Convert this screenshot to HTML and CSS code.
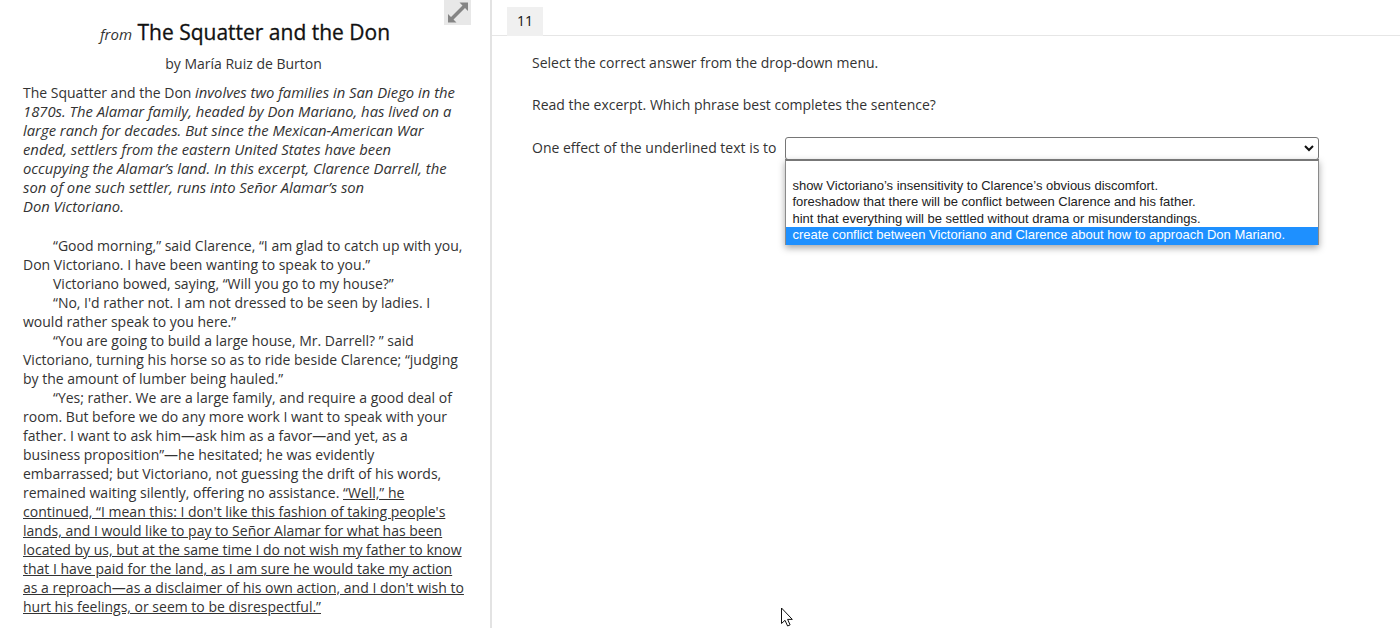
FILE: index.html
```html
<!DOCTYPE html>
<html lang="en">
<head>
<meta charset="utf-8">
<title>The Squatter and the Don</title>
<link rel="stylesheet" href="styles.css">
</head>
<body>
<div class="app">
  <aside class="passage">
    <button class="expand" aria-label="Expand">
      <svg width="26" height="24" viewBox="0 0 26 24"><path fill="#858585" d="M23 1.500V10l-3-3L8.500 18.500l3 3H3V13l3 3L17.500 4.500l-3-3z"/></svg>
    </button>
    <h1 class="title"><em>from</em> The Squatter and the Don</h1>
    <p class="author">by María Ruiz de Burton</p>
    <p class="intro">The Squatter and the Don <em>involves two families in San Diego in the 1870s. The Alamar family, headed by Don Mariano, has lived on a large ranch for decades. But since the Mexican-American War ended, settlers from the eastern United States have been<br>occupying the Alamar’s land. In this excerpt, Clarence Darrell, the<br>son of one such settler, runs into Señor Alamar’s son<br>Don Victoriano.</em></p>
    <p class="para">“Good morning,” said Clarence, “I am glad to catch up with you, Don Victoriano. I have been wanting to speak to you.”</p>
    <p class="para">Victoriano bowed, saying, “Will you go to my house?”</p>
    <p class="para">“No, I'd rather not. I am not dressed to be seen by ladies. I would rather speak to you here.”</p>
    <p class="para">“You are going to build a large house, Mr. Darrell? ” said Victoriano, turning his horse so as to ride beside Clarence; “judging by the amount of lumber being hauled.”</p>
    <p class="para">“Yes; rather. We are a large family, and require a good deal of room. But before we do any more work I want to speak with your father. I want to ask him—ask him as a favor—and yet, as a business proposition”—he hesitated; he was evidently embarrassed; but Victoriano, not guessing the drift of his words, remained waiting silently, offering no assistance. <u>“Well,” he continued, “I mean this: I don't like this fashion of taking people's lands, and I would like to pay to Señor Alamar for what has been located by us, but at the same time I do not wish my father to know that I have paid for the land, as I am sure he would take my action as a reproach—as a disclaimer of his own action, and I don't wish to hurt his feelings, or seem to be disrespectful.”</u></p>
  </aside>
  <main class="question">
    <div class="tabs"><span class="tab">11</span></div>
    <div class="body">
      <p class="instr">Select the correct answer from the drop-down menu.</p>
      <p class="instr">Read the excerpt. Which phrase best completes the sentence?</p>
      <div class="answer">
        <span>One effect of the underlined text is to</span>
        <div class="dropdown">
          <select class="select" aria-label="Answer"><option></option></select>
          <svg class="chevron" width="10" height="7" viewBox="0 0 10 7"><path fill="none" stroke="#111" stroke-width="2" d="M1 1l4 4 4-4"/></svg>
          <ul class="menu">
            <li>show Victoriano’s insensitivity to Clarence’s obvious discomfort.</li>
            <li>foreshadow that there will be conflict between Clarence and his father.</li>
            <li>hint that everything will be settled without drama or misunderstandings.</li>
            <li class="active">create conflict between Victoriano and Clarence about how to approach Don Mariano.</li>
          </ul>
        </div>
      </div>
    </div>
  </main>
</div>
<svg class="cursor" width="13" height="20" viewBox="0 0 13 20"><path fill="#fff" stroke="#111" stroke-width="1" d="M1.500 1v15.500l3.500-3.200 2.600 5.700 2.500-1.100-2.500-5.500h4.700z"/></svg>
</body>
</html>
```
FILE: styles.css
```css
* { box-sizing: border-box; }
html, body { margin: 0; height: 100%; overflow: hidden; background: #fff; }
body { font-family: "Open Sans", sans-serif; font-size: 14px; line-height: 19px; color: #333; position: relative; }
.app { display: flex; height: 628px; }
.passage { position: relative; width: 492px; flex: none; padding: 0 26px 0 23px; border-right: 2px solid #e3e3e3; overflow: hidden; }
.expand { position: absolute; top: 0; left: 444px; width: 27px; height: 25px; padding: 0; border: 0; background: #e8e8e8; display: flex; align-items: center; justify-content: center; }
.title { margin: 17px 0 0; padding-left: 3px; font-size: 21px; line-height: 30px; font-weight: 400; color: #111; text-align: center; -webkit-text-stroke: 0.3px #111; }
.title em { font-size: 15px; color: #333; -webkit-text-stroke: 0; }
.author { margin: 5px 0 0; text-align: center; }
.intro { margin: 10px 0 20px; }
.intro em { font-size: 14.800px; line-height: 19px; }
.para { margin: 0; text-indent: 30px; }
.question { flex: 1; min-width: 0; }
.tabs { height: 36px; padding: 7px 0 0 15px; border-bottom: 1px solid #e6e6e6; }
.tab { display: block; width: 36px; height: 29px; background: #f0f0f0; color: #111; text-align: center; line-height: 27px; }
.body { padding: 17px 0 0 40px; }
.instr { margin: 0 0 23px; }
.answer { display: flex; align-items: flex-start; gap: 9px; line-height: 21px; }
.dropdown { position: relative; width: 534px; }
.select { display: block; width: 100%; height: 23px; padding: 0; appearance: none; font-family: "Liberation Sans", sans-serif; font-size: 13px; background: #fff; border: 1px solid #767676; border-radius: 3px; }
.chevron { position: absolute; top: 8px; left: 519px; }
.menu { position: absolute; z-index: 2; top: 22px; left: 0; width: 100%; margin: 0; padding: 17px 0 0; list-style: none; background: #fff; border: 1px solid #8a8a8a; border-top: 2px solid #777; border-bottom: 0; font-family: "Liberation Sans", sans-serif; font-size: 13px; line-height: 16.400px; color: #222; box-shadow: 0 3px 7px rgba(0,0,0,.35); }
.menu li { padding-left: 6px; white-space: nowrap; }
.menu .active { background: #1e90ff; color: #fff; padding-bottom: 1px; }
.cursor { position: absolute; left: 780px; top: 607px; }
```
